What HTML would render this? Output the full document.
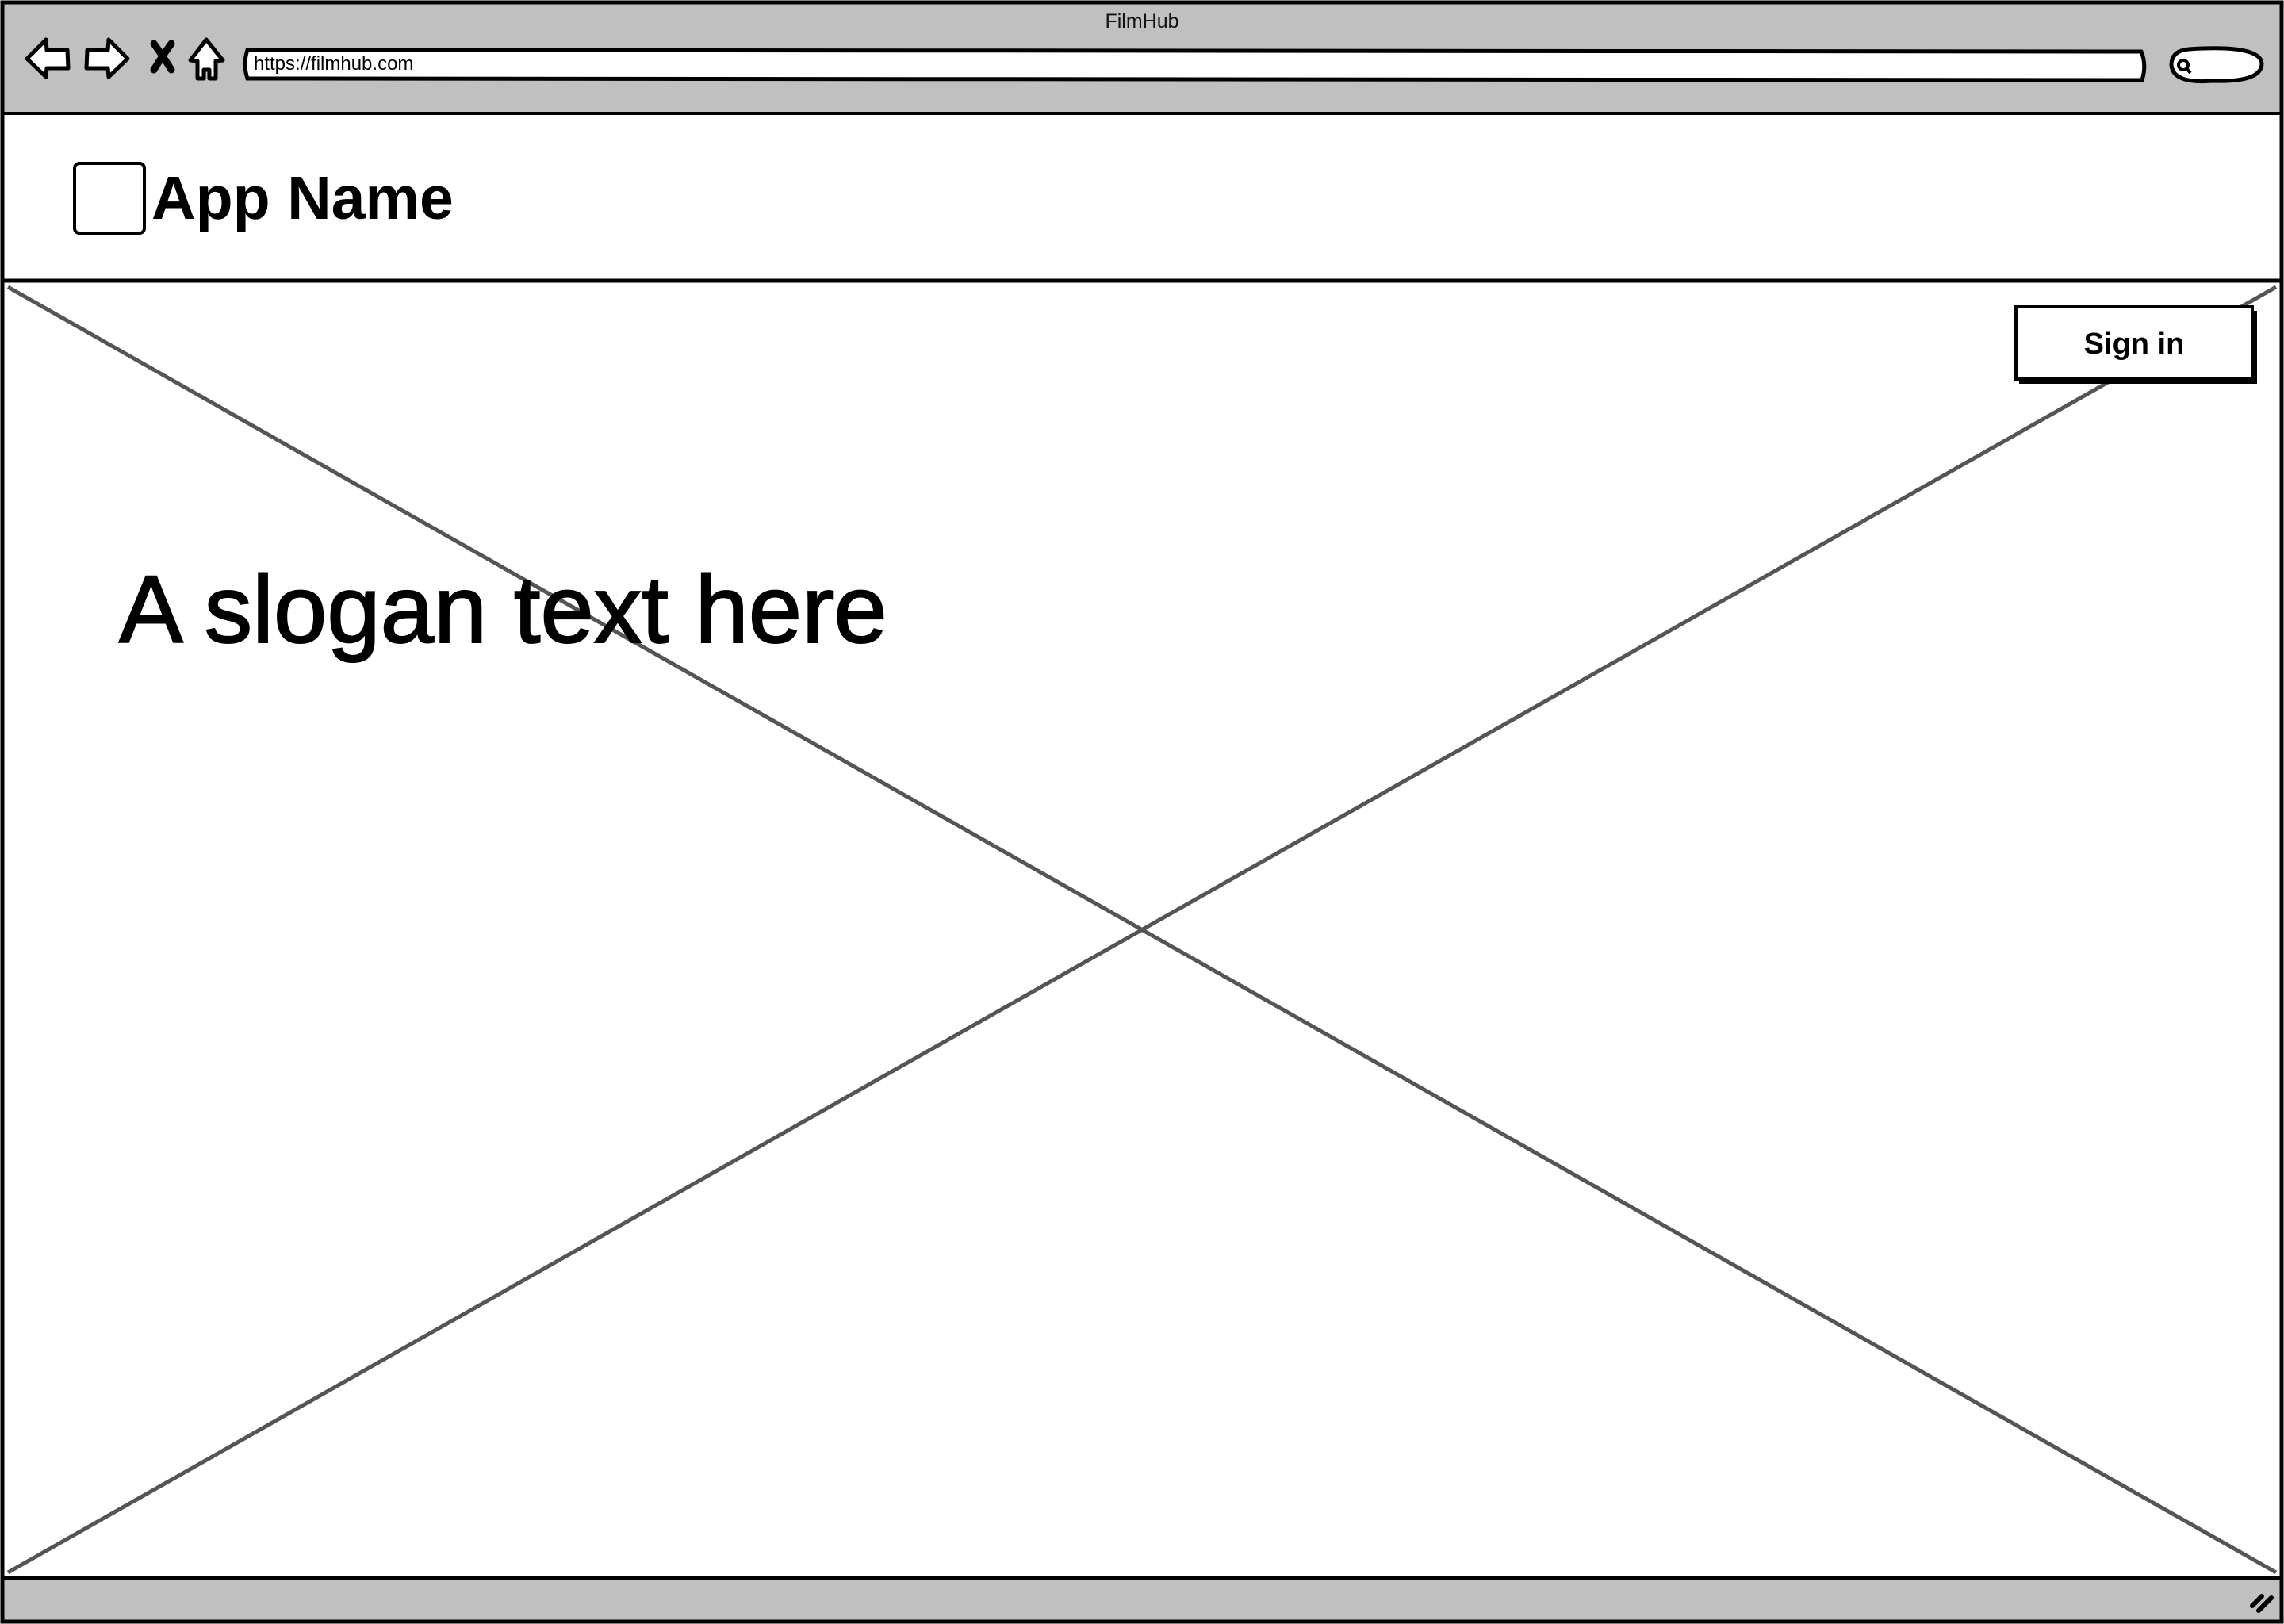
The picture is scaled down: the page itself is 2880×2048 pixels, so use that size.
<!DOCTYPE html>
<html><head><meta charset="utf-8"><style>
html,body{margin:0;padding:0;background:#fff;}
body{width:2880px;height:2048px;overflow:hidden;position:relative;}
svg{position:absolute;left:0;top:0;}
</style></head><body>
<svg width="2880" height="2048" viewBox="0 0 2880 2048" xmlns="http://www.w3.org/2000/svg">
  <rect x="3" y="3" width="2874" height="140" fill="#c0c0c0"/>
  <text x="1440" y="35" text-anchor="middle" font-family="Liberation Sans, sans-serif" font-size="25" fill="#111">FilmHub</text>
  <path d="M34,74 L58,50 L59,63 L85,63 L86,86 L59,86 L58,97 Z" fill="#fff" stroke="#000" stroke-width="5" stroke-linejoin="round"/>
  <path d="M161,74 L137,50 L136,63 L110,63 L109,86 L136,86 L137,97 Z" fill="#fff" stroke="#000" stroke-width="5" stroke-linejoin="round"/>
  <path d="M194,55 Q205,70 216,88 M216,55 Q205,70 194,88" fill="none" stroke="#000" stroke-width="9" stroke-linecap="round"/>
  <path d="M260,50 L281,76 L272,77 L272,99 L264,99 L264,88 L257,88 L257,99 L249,99 L249,77 L240,76 Z" fill="#fff" stroke="#000" stroke-width="5" stroke-linejoin="round"/>
  <path d="M312,63 L2700,65 Q2707,82 2701,101 L312,99 Q306,81 312,63 Z" fill="#fff" stroke="#000" stroke-width="5"/>
  <text x="320" y="88" font-family="Liberation Sans, sans-serif" font-size="24" fill="#000">https://filmhub.com</text>
  <path d="M2760,62 Q2850,56 2852,80 Q2852,104 2790,102 Q2740,106 2738,82 Q2738,64 2760,62 Z" fill="#fff" stroke="#000" stroke-width="5"/>
  <circle cx="2753" cy="82" r="6" fill="none" stroke="#000" stroke-width="4"/>
  <line x1="2757" y1="86" x2="2762" y2="92" stroke="#000" stroke-width="4"/>
  <line x1="3" y1="143" x2="2877" y2="143" stroke="#000" stroke-width="4"/>

  <rect x="94" y="206" width="88" height="88" rx="6" fill="#fff" stroke="#000" stroke-width="4"/>
  <text x="191" y="276" font-family="Liberation Sans, sans-serif" font-weight="bold" font-size="77" fill="#000">App Name</text>
  <line x1="3" y1="354" x2="2877" y2="354" stroke="#000" stroke-width="5"/>

  <line x1="10" y1="362" x2="2870" y2="1983" stroke="#555" stroke-width="5"/>
  <line x1="2870" y1="362" x2="10" y2="1983" stroke="#555" stroke-width="5"/>

  <text x="150" y="810" font-family="Liberation Sans, sans-serif" font-size="121" fill="#000" stroke="#000" stroke-width="2">A slogan text here</text>

  <rect x="2546" y="392" width="300" height="92" fill="#000"/>
  <rect x="2542" y="387" width="298" height="91" fill="#fff" stroke="#000" stroke-width="4"/>
  <text x="2691" y="446" text-anchor="middle" font-family="Liberation Sans, sans-serif" font-weight="bold" font-size="38" fill="#000">Sign in</text>

  <line x1="3" y1="1990" x2="2877" y2="1990" stroke="#000" stroke-width="5"/>
  <rect x="3" y="1993" width="2874" height="50" fill="#c0c0c0"/>
  <path d="M2840,2025 L2852,2013 M2848,2031 L2864,2015" stroke="#000" stroke-width="6" stroke-linecap="round"/>

  <rect x="3" y="3" width="2874" height="2042" fill="none" stroke="#000" stroke-width="5"/>
</svg>
</body></html>
